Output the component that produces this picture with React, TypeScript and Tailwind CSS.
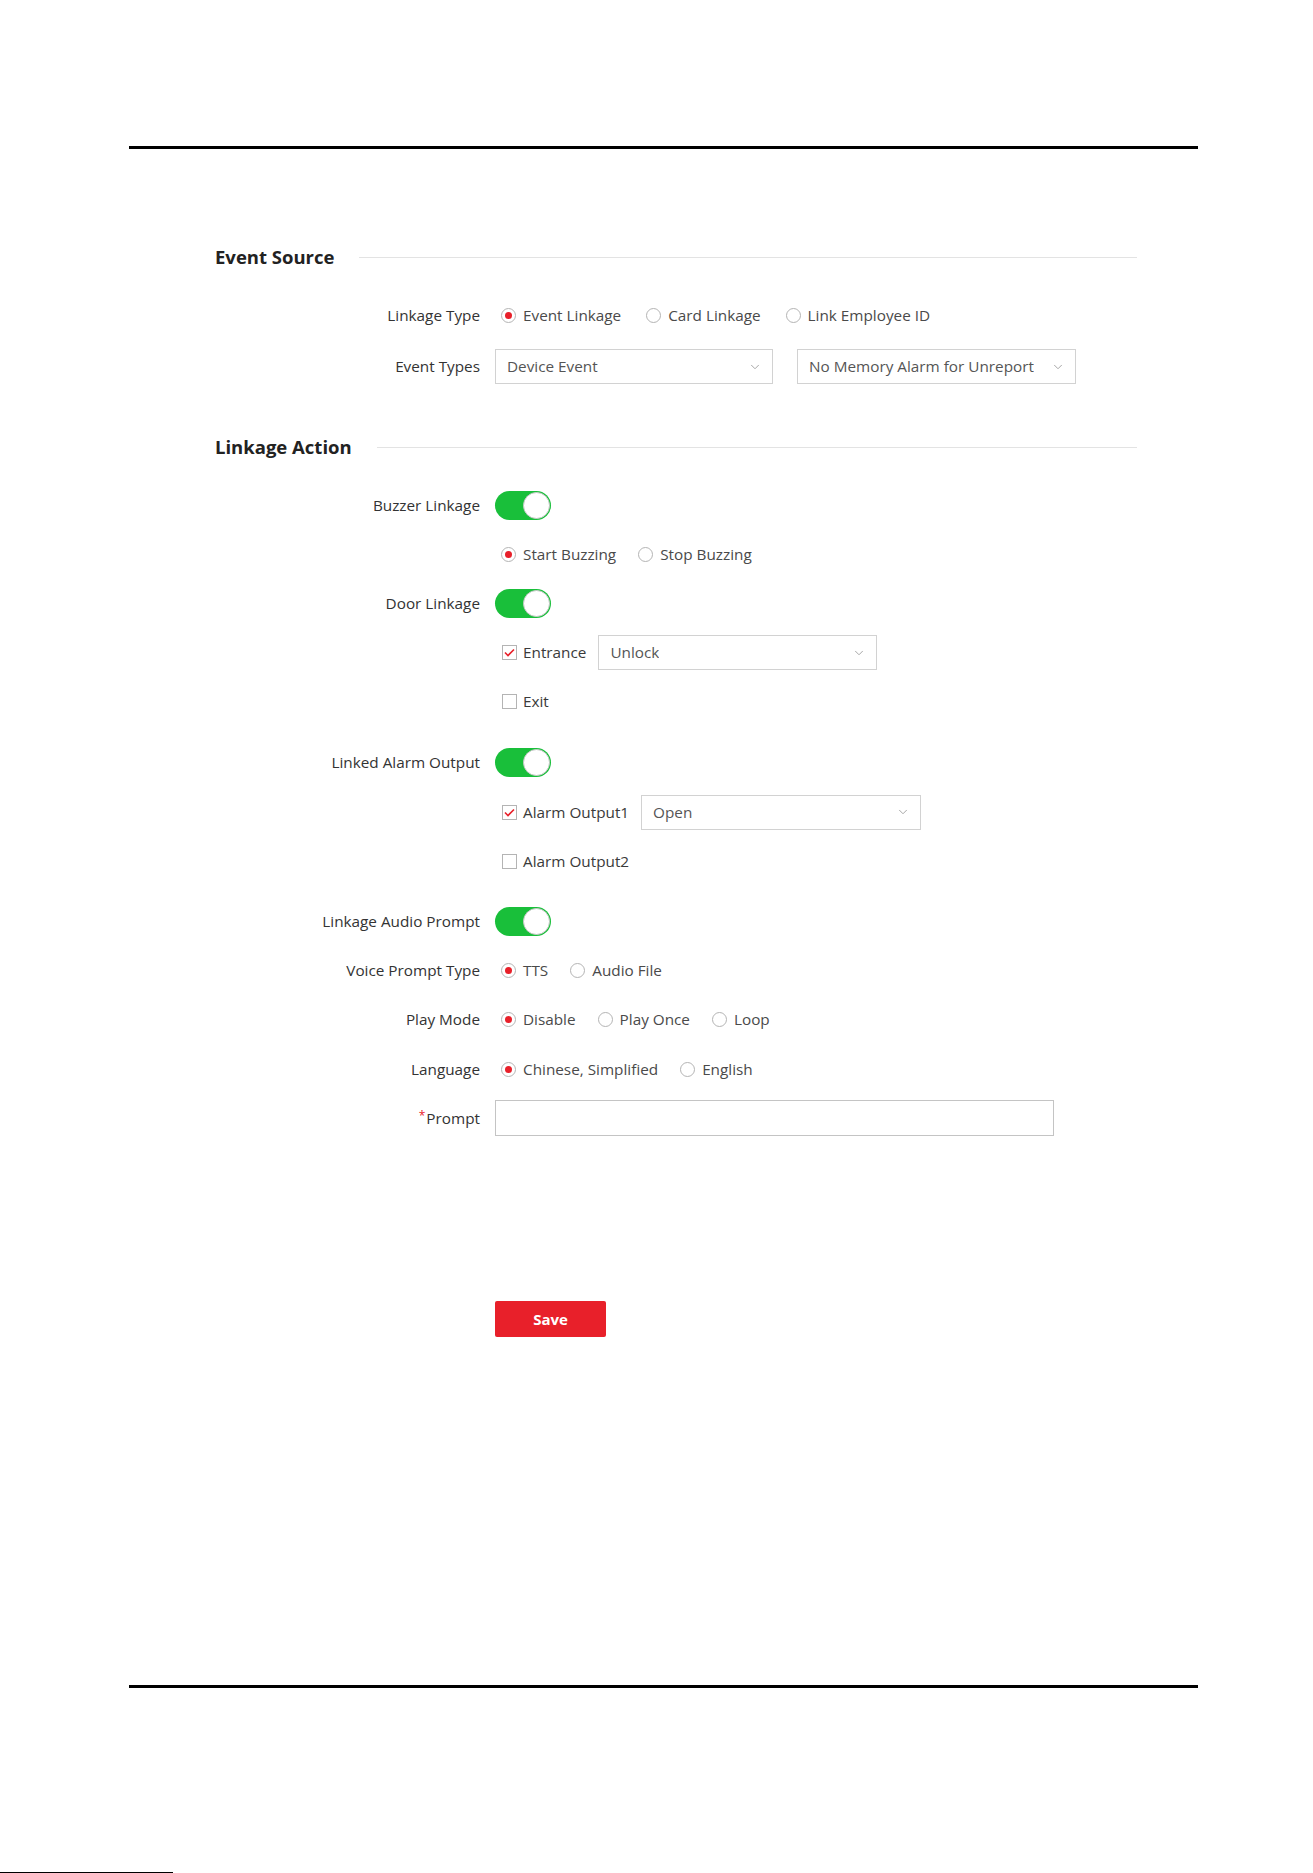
import React from 'react';
import { ChevronDown } from 'lucide-react';

function Radio({ label, checked = false }: { label: string; checked?: boolean }) {
  return (
    <div className="flex items-center gap-[7px]">
      <span className="w-[15px] h-[15px] rounded-full border border-[#b4b4b4] bg-white flex items-center justify-center">
        {checked && <span className="w-[7px] h-[7px] rounded-full bg-[#e8202a]" />}
      </span>
      <span className="text-[#4a4a4a]">{label}</span>
    </div>
  );
}

function Check({ label, checked = false }: { label: string; checked?: boolean }) {
  return (
    <div className="flex items-center gap-[6px]">
      <span className="w-[15px] h-[15px] border border-[#b4b4b4] bg-white flex items-center justify-center">
        {checked && (
          <svg width="11" height="9" viewBox="0 0 11 9" fill="none">
            <path d="M1 4.5L4 7.5L10 1.5" stroke="#e8202a" strokeWidth="1.6" />
          </svg>
        )}
      </span>
      <span className="text-[#3a3a3a]">{label}</span>
    </div>
  );
}

function Select({ value, width = 'w-[278px]' }: { value: string; width?: string }) {
  return (
    <div className={`${width} h-[35px] border border-[#d2d2d2] bg-white flex items-center justify-between pl-[11px] pr-[10px]`}>
      <span className="text-[#555] whitespace-nowrap overflow-hidden">{value}</span>
      <ChevronDown className="w-[14px] h-[14px] text-[#9a9a9a] shrink-0 ml-1" strokeWidth={1.5} />
    </div>
  );
}

function Toggle() {
  return (
    <div className="w-[56px] h-[29px] rounded-full bg-[#19bf3a] flex items-center justify-end pr-[1px]">
      <span className="w-[27px] h-[27px] rounded-full bg-white border border-[#c8c8c8]" />
    </div>
  );
}

function Row({ label, h = 'h-[49px]', children, mt = '' }: { label?: React.ReactNode; h?: string; children: React.ReactNode; mt?: string }) {
  return (
    <div className={`flex items-center ${h} ${mt}`}>
      <div className="w-[280px] pr-[15px] text-right text-[#333] whitespace-nowrap">{label}</div>
      <div className="flex items-center">{children}</div>
    </div>
  );
}

function Heading({ title }: { title: string }) {
  return (
    <div className="flex items-center h-[30px]">
      <span className="text-[18.5px] font-bold text-[#222] whitespace-nowrap">{title}</span>
      <div className="flex-1 h-px bg-[#e3e3e3] ml-[25px]" />
    </div>
  );
}

export default function App() {
  return (
    <div
      className="w-[1313px] h-[1873px] bg-white flex flex-col text-[15.3px]"
      style={{ fontFamily: '"Open Sans", "Noto Sans", sans-serif' }}
    >
      <div className="ml-[129px] mt-[146px] w-[1069px] h-[3px] bg-black" />

      <div className="ml-[215px] w-[922px] mt-[93px] flex flex-col">
        <Heading title="Event Source" />

        <Row label="Linkage Type" h="h-[51px]" mt="mt-[18px]">
          <div className="flex items-center gap-[25px] ml-[6px]">
            <Radio label="Event Linkage" checked />
            <Radio label="Card Linkage" />
            <Radio label="Link Employee ID" />
          </div>
        </Row>
        <Row label="Event Types" h="h-[51px]">
          <div className="flex items-center gap-[24px]">
            <Select value="Device Event" />
            <Select value="No Memory Alarm for Unreport" width="w-[279px]" />
          </div>
        </Row>

        <div className="mt-[40px]">
          <Heading title="Linkage Action" />
        </div>

        <Row label="Buzzer Linkage" mt="mt-[19px]">
          <Toggle />
        </Row>
        <Row>
          <div className="flex items-center gap-[22px] ml-[6px]">
            <Radio label="Start Buzzing" checked />
            <Radio label="Stop Buzzing" />
          </div>
        </Row>
        <Row label="Door Linkage">
          <Toggle />
        </Row>
        <Row>
          <div className="flex items-center gap-[12px] ml-[7px]">
            <Check label="Entrance" checked />
            <Select value="Unlock" width="w-[279px]" />
          </div>
        </Row>
        <Row>
          <div className="ml-[7px]">
            <Check label="Exit" />
          </div>
        </Row>

        <Row label="Linked Alarm Output" h="h-[50px]" mt="mt-[11px]">
          <Toggle />
        </Row>
        <Row h="h-[50px]">
          <div className="flex items-center gap-[12px] ml-[7px]">
            <Check label="Alarm Output1" checked />
            <Select value="Open" width="w-[280px]" />
          </div>
        </Row>
        <Row>
          <div className="ml-[7px]">
            <Check label="Alarm Output2" />
          </div>
        </Row>

        <Row label="Linkage Audio Prompt" h="h-[50px]" mt="mt-[10px]">
          <Toggle />
        </Row>
        <Row label="Voice Prompt Type">
          <div className="flex items-center gap-[22px] ml-[6px]">
            <Radio label="TTS" checked />
            <Radio label="Audio File" />
          </div>
        </Row>
        <Row label="Play Mode">
          <div className="flex items-center gap-[22px] ml-[6px]">
            <Radio label="Disable" checked />
            <Radio label="Play Once" />
            <Radio label="Loop" />
          </div>
        </Row>
        <Row label="Language" h="h-[50px]">
          <div className="flex items-center gap-[22px] ml-[6px]">
            <Radio label="Chinese, Simplified" checked />
            <Radio label="English" />
          </div>
        </Row>
        <Row
          label={
            <span>
              <span className="text-[#e8202a] text-[12px] align-top mr-[1px]">*</span>Prompt
            </span>
          }
          h="h-[48px]"
        >
          <div className="w-[559px] h-[36px] border border-[#c4c4c4] bg-white" />
        </Row>

        <div className="ml-[280px] mt-[159px]">
          <button className="w-[111px] h-[36px] bg-[#e8202a] text-white font-bold text-[15px] rounded-[2px]">
            Save
          </button>
        </div>
      </div>

      <div className="ml-[129px] mt-[348px] w-[1069px] h-[3px] bg-black" />
      <div className="flex-1" />
      <div className="w-[173px] h-px bg-black" />
    </div>
  );
}
